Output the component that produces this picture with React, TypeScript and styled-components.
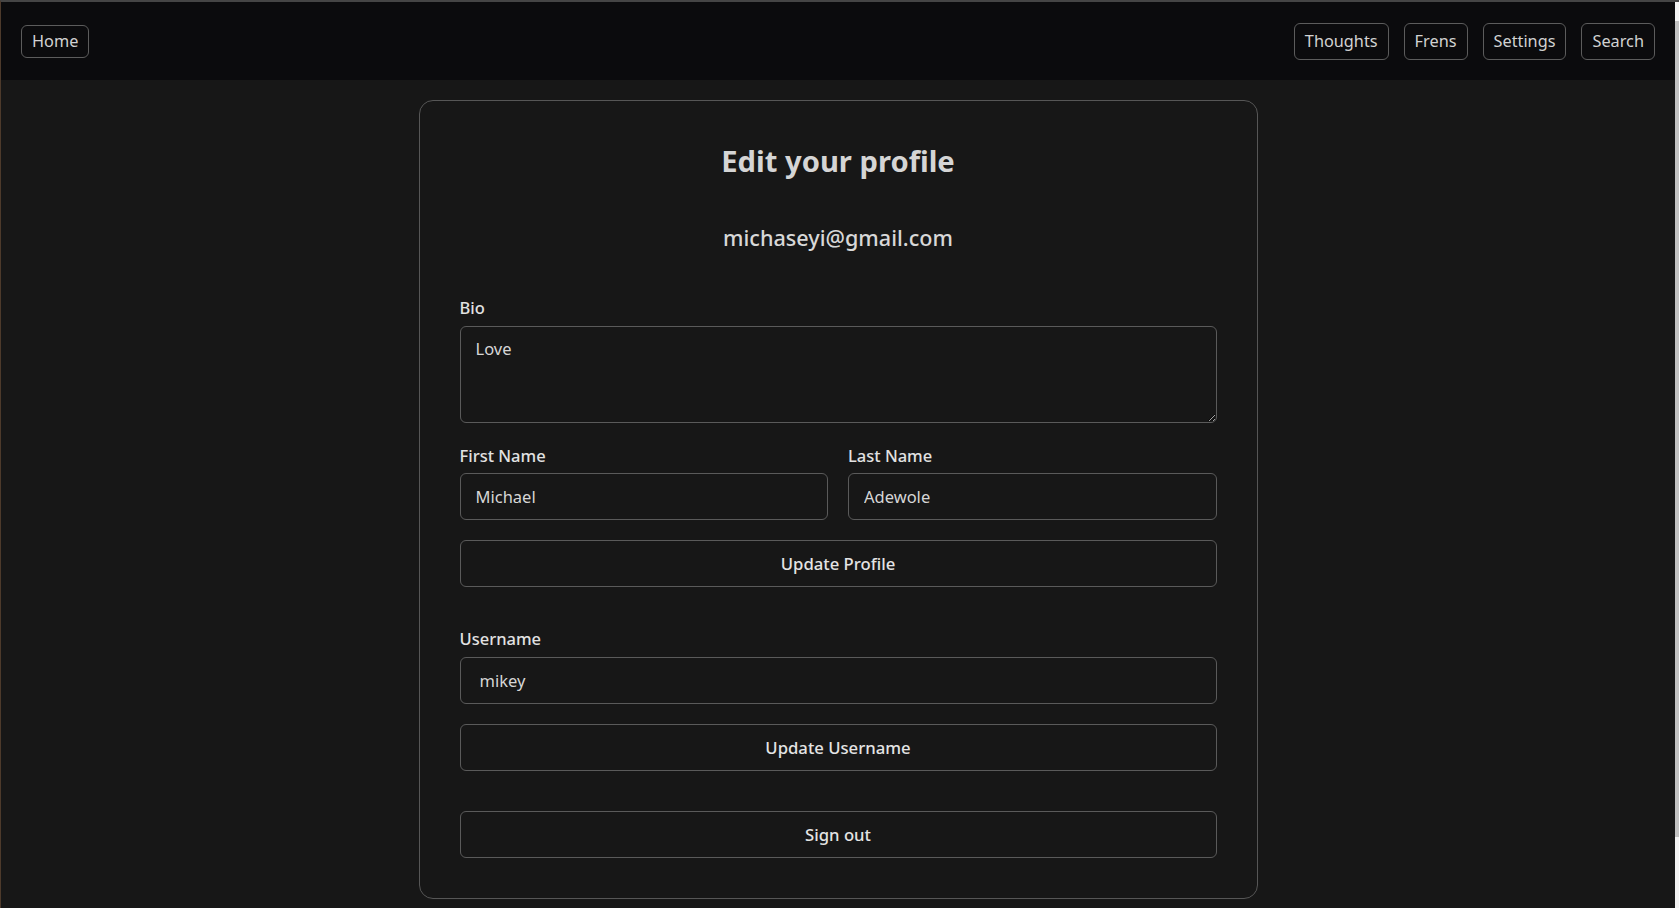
import React from "react";
import styled, { createGlobalStyle } from "styled-components";

const GlobalStyle = createGlobalStyle`
  html, body {
    height: 100%;
  }
  body {
    margin: 0;
    background: #171717;
    border-top: 2px solid #454545;
    border-left: 1px solid #4d3a2b;
    font-family: "Noto Sans", "Open Sans", sans-serif;
    color: #e0e0e0;
    overflow: hidden;
  }
  * {
    box-sizing: border-box;
  }
`;

const Frame = styled.div`
  display: flex;
  height: calc(100vh - 2px);
`;

const Page = styled.div`
  flex: 1;
  min-width: 0;
  display: flex;
  flex-direction: column;
`;

const ScrollTrack = styled.div`
  width: 4px;
  flex: none;
  background: #f3f3f3;
  padding-top: 19px;
`;

const ScrollThumb = styled.div`
  height: 816px;
  background: #c2c2c2;
`;

const Header = styled.header`
  display: flex;
  align-items: center;
  justify-content: space-between;
  height: 78px;
  flex: none;
  padding: 0 20px;
  background: #0b0b0d;
`;

const NavGroup = styled.nav`
  display: flex;
  align-items: center;
  gap: 15px;
`;

const NavButton = styled.button<{ $tall?: boolean }>`
  height: ${(p) => (p.$tall ? "37px" : "33px")};
  padding: 0 10px;
  border: 1px solid #5c5c5c;
  border-radius: 6px;
  background: transparent;
  color: #d2d2d2;
  font-family: inherit;
  font-size: 16.3px;
  line-height: 1;
  cursor: pointer;
`;

const Main = styled.main`
  display: flex;
  justify-content: center;
  padding-top: 20px;
`;

const Card = styled.section`
  width: 839px;
  display: flex;
  flex-direction: column;
  padding: 40px;
  border: 1px solid #565656;
  border-radius: 14px;
  background: #171717;
`;

const Title = styled.h1`
  margin: 2px 0 0;
  text-align: center;
  font-size: 29.2px;
  line-height: 37px;
  font-weight: 700;
  color: #d5d5d5;
`;

const Email = styled.h2`
  margin: 45px 0 0;
  text-align: center;
  font-size: 21.6px;
  line-height: 26px;
  font-weight: 500;
  color: #d8d8d8;
`;

const Field = styled.label<{ $gap?: number }>`
  display: flex;
  flex-direction: column;
  gap: ${(p) => p.$gap ?? 7}px;
  min-width: 0;
`;

const LabelText = styled.span`
  font-size: 16.5px;
  line-height: 20px;
  font-weight: 500;
  color: #e2e2e2;
`;

const Block = styled.div<{ $top: number }>`
  margin-top: ${(p) => p.$top}px;
`;

const Row = styled.div<{ $top: number }>`
  display: grid;
  grid-template-columns: 1fr 1fr;
  gap: 20px;
  margin-top: ${(p) => p.$top}px;
`;

const TextArea = styled.textarea`
  height: 97px;
  width: 100%;
  padding: 12px 15px;
  border: 1px solid #5a5a5a;
  border-radius: 6px;
  background: #171717;
  color: #d6d6d6;
  font-family: inherit;
  font-size: 16.5px;
  line-height: 20px;
  outline: none;
`;

const Input = styled.input<{ $indent?: number }>`
  height: 47px;
  width: 100%;
  padding: 0 ${(p) => p.$indent ?? 15}px;
  border: 1px solid #5a5a5a;
  border-radius: 6px;
  background: #171717;
  color: #d6d6d6;
  font-family: inherit;
  font-size: 16.5px;
  outline: none;
`;

const ActionButton = styled.button<{ $top: number }>`
  height: 47px;
  width: 100%;
  margin-top: ${(p) => p.$top}px;
  border: 1px solid #5a5a5a;
  border-radius: 6px;
  background: #171717;
  color: #e4e4e4;
  font-family: inherit;
  font-size: 16.7px;
  font-weight: 500;
  cursor: pointer;
`;

export default function App() {
  return (
    <>
      <GlobalStyle />
      <Frame>
        <Page>
          <Header>
            <NavGroup>
              <NavButton>Home</NavButton>
            </NavGroup>
            <NavGroup>
              <NavButton $tall>Thoughts</NavButton>
              <NavButton $tall>Frens</NavButton>
              <NavButton $tall>Settings</NavButton>
              <NavButton $tall>Search</NavButton>
            </NavGroup>
          </Header>
          <Main>
            <Card>
              <Title>Edit your profile</Title>
              <Email>michaseyi@gmail.com</Email>
              <Block $top={47}>
                <Field $gap={8}>
                  <LabelText>Bio</LabelText>
                  <TextArea defaultValue="Love" />
                </Field>
              </Block>
              <Row $top={23}>
                <Field>
                  <LabelText>First Name</LabelText>
                  <Input defaultValue="Michael" />
                </Field>
                <Field>
                  <LabelText>Last Name</LabelText>
                  <Input defaultValue="Adewole" />
                </Field>
              </Row>
              <ActionButton $top={20}>Update Profile</ActionButton>
              <Block $top={42}>
                <Field $gap={8}>
                  <LabelText>Username</LabelText>
                  <Input $indent={19} defaultValue="mikey" />
                </Field>
              </Block>
              <ActionButton $top={20}>Update Username</ActionButton>
              <ActionButton $top={40}>Sign out</ActionButton>
            </Card>
          </Main>
        </Page>
        <ScrollTrack>
          <ScrollThumb />
        </ScrollTrack>
      </Frame>
    </>
  );
}
